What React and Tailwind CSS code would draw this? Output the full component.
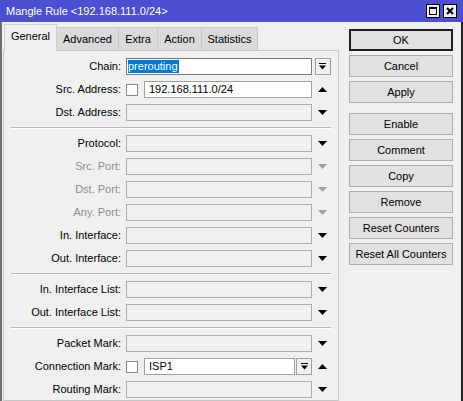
import React from "react";

// small triangle used beside the fields
const Tri = ({ up, disabled }) => (
  <svg width="9" height="5" viewBox="0 0 9 5">
    <polygon
      points={up ? "0,5 9,5 4.5,0" : "0,0 9,0 4.5,5"}
      fill={disabled ? "#a0a0a0" : "#000"}
    />
  </svg>
);

const DropIcon = () => (
  <svg width="7" height="7" viewBox="0 0 7 7">
    <rect x="0" y="0" width="7" height="1" fill="#000" />
    <polygon points="0,2.5 7,2.5 3.5,6.5" fill="#000" />
  </svg>
);

const DropButton = () => (
  <div className="flex h-[17px] w-[16px] items-center justify-center border border-[#a0a0a0] bg-[#f0f0f0]">
    <DropIcon />
  </div>
);

const Check = () => <div className="mr-[6px] h-[12px] w-[12px] border border-[#8a8a8a] bg-white" />;

const Empty = () => <div className="h-[17px] w-[186px] border border-[#adadad] bg-[#f0f0f0]" />;

const Row = ({ label, disabled, children, trail }) => (
  <div className="flex h-[17px] items-center">
    <div
      className={
        disabled
          ? "w-[122px] pr-[5px] text-right text-[#8d8d8d]"
          : "w-[122px] pr-[5px] text-right text-black"
      }
    >
      {label}
    </div>
    {children}
    <div className="ml-[2px] flex h-[17px] w-[17px] items-center justify-center">{trail}</div>
  </div>
);

const Sep = () => <div className="ml-[7px] h-[2px] w-[320px] border-t border-b border-t-[#b9b9b9] border-b-white" />;

const tabs = [
  ["General", "w-[53px]"],
  ["Advanced", "w-[62px]"],
  ["Extra", "w-[39px]"],
  ["Action", "w-[44px]"],
  ["Statistics", "w-[56px]"],
];
const buttons = [
  ["OK", 0],
  ["Cancel", 0],
  ["Apply", 0],
  ["Enable", 1],
  ["Comment", 0],
  ["Copy", 0],
  ["Remove", 0],
  ["Reset Counters", 0],
  ["Reset All Counters", 0],
];

export default function App() {
  return (
    <div className="flex h-[401px] w-[463px] flex-col overflow-hidden bg-[#f0f0f0] font-['Liberation_Sans',Arial,sans-serif] text-[11px] text-black">
      {/* Title bar */}
      <div className="flex h-[22px] shrink-0 items-center bg-[#4b4fd0] pl-[6px] pr-[6px]">
        <span className="flex-1 text-white">Mangle Rule &lt;192.168.111.0/24&gt;</span>
        <div className="flex gap-[3px] -mt-[1px]">
          <div className="flex h-[14px] w-[14px] items-center justify-center border border-black bg-[#f0f0f0]">
            <div className="h-[8px] w-[8px] border border-t-2 border-black" />
          </div>
          <div className="flex h-[14px] w-[14px] items-center justify-center border border-black bg-[#f0f0f0]">
            <svg width="8" height="8" viewBox="0 0 8 8">
              <path d="M1 1 L7 7 M7 1 L1 7" stroke="#000" strokeWidth="2" />
            </svg>
          </div>
        </div>
      </div>

      {/* Body */}
      <div className="flex flex-1 border-l-2 border-r-2 border-l-[#6e6e6e] border-r-[#222]">
        {/* Left: tabs + panel */}
        <div className="flex w-[337px] flex-col">
          <div className="ml-[2px] mt-[2px] flex h-[26px] items-end">
            {tabs.map(([t, w], i) =>
              i === 0 ? (
                <div
                  key={t}
                  className={`relative z-10 -mb-px flex h-[27px] items-center justify-center border border-b-0 border-[#d0d0d0] bg-[#f0f0f0] pb-[3px] ${w}`}
                >
                  {t}
                </div>
              ) : (
                <div
                  key={t}
                  className={`flex h-[23px] items-center justify-center border border-b-0 border-l-0 border-[#c8c8c8] bg-[#dadada] ${w}`}
                >
                  {t}
                </div>
              )
            )}
          </div>

          <div className="ml-[1px] flex flex-1 flex-col gap-[6px] border border-[#c8c8c8] pt-[7px]">
            <Row label="Chain:" trail={<DropButton />}>
              <div className="flex h-[17px] w-[186px] items-center border border-[#7a7a7a] bg-white pl-[1px]">
                <span className="flex h-[13px] items-center bg-[#0078d7] pr-[1px] text-white">prerouting</span>
              </div>
            </Row>
            <Row label="Src. Address:" trail={<Tri up />}>
              <Check />
              <div className="flex h-[17px] w-[168px] items-center border border-[#a0a0a0] bg-white pl-[4px]">
                192.168.111.0/24
              </div>
            </Row>
            <Row label="Dst. Address:" trail={<Tri />}>
              <Empty />
            </Row>
            <Sep />
            <Row label="Protocol:" trail={<Tri />}>
              <Empty />
            </Row>
            <Row label="Src. Port:" disabled trail={<Tri disabled />}>
              <Empty />
            </Row>
            <Row label="Dst. Port:" disabled trail={<Tri disabled />}>
              <Empty />
            </Row>
            <Row label="Any. Port:" disabled trail={<Tri disabled />}>
              <Empty />
            </Row>
            <Row label="In. Interface:" trail={<Tri />}>
              <Empty />
            </Row>
            <Row label="Out. Interface:" trail={<Tri />}>
              <Empty />
            </Row>
            <Sep />
            <Row label="In. Interface List:" trail={<Tri />}>
              <Empty />
            </Row>
            <Row label="Out. Interface List:" trail={<Tri />}>
              <Empty />
            </Row>
            <Sep />
            <Row label="Packet Mark:" trail={<Tri />}>
              <Empty />
            </Row>
            <Row label="Connection Mark:" trail={<Tri up />}>
              <Check />
              <div className="flex h-[17px] w-[151px] items-center border border-[#a0a0a0] bg-white pl-[4px]">
                ISP1
              </div>
              <div className="ml-[1px]">
                <DropButton />
              </div>
            </Row>
            <Row label="Routing Mark:" trail={<Tri />}>
              <Empty />
            </Row>
          </div>
        </div>

        {/* Right: action buttons */}
        <div className="ml-[10px] mt-[7px] flex w-[104px] flex-col gap-[4px]">
          {buttons.map(([b, gapBefore]) => (
            <div
              key={b}
              className={
                b === "OK"
                  ? "flex h-[22px] items-center justify-center border-2 border-[#1e1e1e] bg-[#e1e1e1]"
                  : gapBefore
                  ? "mt-[6px] flex h-[22px] items-center justify-center border border-[#adadad] bg-[#e1e1e1]"
                  : "flex h-[22px] items-center justify-center border border-[#adadad] bg-[#e1e1e1]"
              }
            >
              {b}
            </div>
          ))}
        </div>
      </div>
    </div>
  );
}
